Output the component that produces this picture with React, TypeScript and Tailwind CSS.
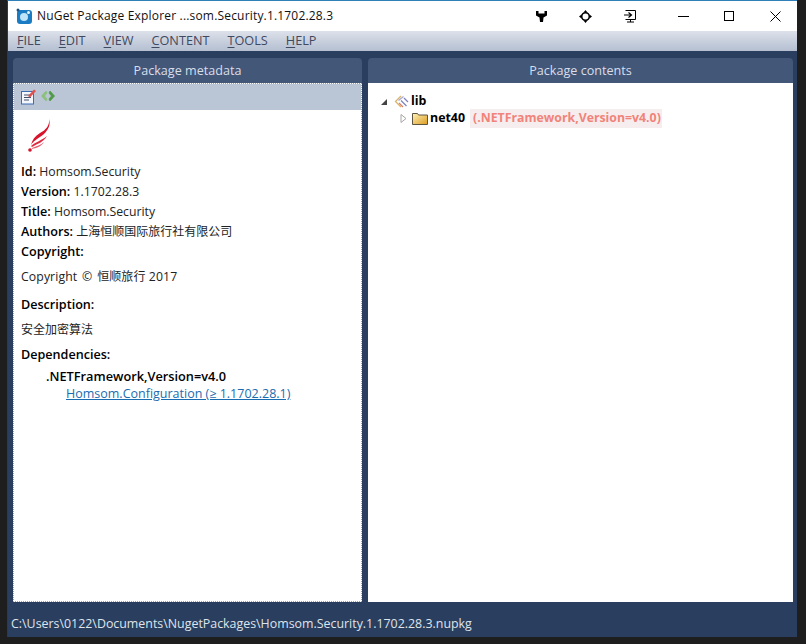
import React from "react";

const sans = "font-['Open_Sans','Noto_Sans_CJK_SC',sans-serif]";

function AppLogo() {
  return (
    <svg width="17" height="17" viewBox="0 0 17 17" className="shrink-0">
      <rect x="1" y="2" width="15" height="14" rx="3" fill="#1b7cc4" />
      <circle cx="8" cy="9" r="4" fill="#bfe3f7" />
      <circle cx="2" cy="2" r="1.5" fill="#1a4f80" />
      <circle cx="12.5" cy="4.5" r="1.5" fill="#e8f4fb" />
    </svg>
  );
}

function Feather() {
  return (
    <svg width="26" height="34" viewBox="0 0 26 34">
      <path d="M23 1 C24 7 20 12 14 15 C9 18 6 22 5 27 C8 22 13 20 18 16 C22 12 25 7 23 1Z" fill="#d8132b" />
      <path d="M5 28 C9 24 15 23 21 18 C18 24 11 26 6 29Z" fill="#e02a40" />
      <path d="M6 30 C10 28 15 27 18 24 C15 29 10 30 6 31Z" fill="#ea5f70" />
      <circle cx="4" cy="32" r="1.8" fill="#d8132b" />
    </svg>
  );
}

function EditIcon() {
  return (
    <svg width="17" height="18" viewBox="0 0 17 18">
      <rect x="1.5" y="4.5" width="12" height="12.5" fill="#f3f6fb" stroke="#3c6cb4" />
      <path d="M4 8h7M4 10.5h7M4 13h5" stroke="#44506a" strokeWidth="1" />
      <path d="M8 9 L14 2.5 L16 4 L10 10.5Z" fill="#e2524c" />
    </svg>
  );
}

function XmlIcon() {
  return (
    <svg width="16" height="12" viewBox="0 0 16 12">
      <path d="M6 1 L1.5 6 L6 11 L7 9 L4.5 6 L7 3Z" fill="#8cc07c" stroke="#8cc07c" strokeWidth="0.8" />
      <path d="M10 1 L14.5 6 L10 11 L9 9 L11.5 6 L9 3Z" fill="#4f9a45" stroke="#4f9a45" strokeWidth="0.8" />
    </svg>
  );
}

function LibIcon() {
  return (
    <svg width="15" height="13" viewBox="0 0 15 13">
      <path d="M7 1 L1.5 6.5 L7 12" fill="none" stroke="#dcb36a" strokeWidth="1.3" />
      <path d="M4.5 5.5 L9.5 1.5" fill="none" stroke="#a5a8d4" strokeWidth="1.2" />
      <path d="M7 5.5 L12.5 11 M10 3 L14 7" fill="none" stroke="#7d82bd" strokeWidth="1.2" />
      <path d="M5 8 L9 12" fill="none" stroke="#d9806f" strokeWidth="1.2" />
    </svg>
  );
}

function FolderIcon() {
  return (
    <svg width="16" height="13" viewBox="0 0 16 13">
      <defs>
        <linearGradient id="fold" x1="0" y1="0" x2="1" y2="1">
          <stop offset="0" stopColor="#fff3b8" />
          <stop offset="1" stopColor="#dc9c22" />
        </linearGradient>
      </defs>
      <path d="M0.5 1.5 h5 l1 1.5 h9 v9.5 h-15z" fill="url(#fold)" stroke="#5d5540" />
    </svg>
  );
}

function WindowTool({ kind }: { kind: "wrench" | "target" | "enter" }) {
  if (kind === "wrench")
    return (
      <svg width="13" height="13" viewBox="0 0 13 13">
        <path d="M1 1 L3.5 1 L3.5 3.5 L9.5 3.5 L9.5 1 L12 1 L12 5.5 L8.5 7.5 L8 12 L5 12 L4.5 7.5 L1 5.5Z" fill="#000" />
      </svg>
    );
  if (kind === "target")
    return (
      <svg width="13" height="13" viewBox="0 0 13 13">
        <circle cx="6.5" cy="6.5" r="3.8" fill="none" stroke="#000" strokeWidth="1.6" />
        <path d="M6.5 0 L8.5 2.5 H4.5Z M6.5 13 L8.5 10.5 H4.5Z M0 6.5 L2.5 4.5 V8.5Z M13 6.5 L10.5 4.5 V8.5Z" fill="#000" />
      </svg>
    );
  return (
    <svg width="14" height="14" viewBox="0 0 14 14">
      <path d="M2.5 1.5 H12.5 V10.5 H2.5 M4 13 H11 M7.5 10.5 V13" fill="none" stroke="#000" />
      <path d="M1 6 H8 M5.5 3.5 L8.5 6 L5.5 8.5" fill="none" stroke="#000" strokeWidth="1.2" />
    </svg>
  );
}

function Menu({ first, rest }: { first: string; rest: string }) {
  return (
    <span>
      <span className="underline underline-offset-2">{first}</span>
      {rest}
    </span>
  );
}

function Cjk({ children }: { children: React.ReactNode }) {
  return <span className="text-[12px]">{children}</span>;
}

function Row({ label, value }: { label: string; value?: React.ReactNode }) {
  return (
    <div className="h-5 leading-5 whitespace-nowrap">
      <span className="font-semibold text-black text-[12.6px]">{label}</span>
      {value ? <span> {value}</span> : null}
    </div>
  );
}

export default function App() {
  return (
    <div className={`${sans} w-[806px] h-[644px] overflow-hidden bg-[#1e1e1e] flex flex-col pl-[7px] pr-[9px] pb-[7px] text-[12.25px] text-[#222]`}>
      <div className="flex-1 flex flex-col border-t border-[#2f7fb8] border-l border-l-[#2a3a55] min-h-0">
        <div className="h-[30px] bg-white flex items-center shrink-0 pl-[8px]">
          <AppLogo />
          <span className="ml-[4px] text-[12px] text-[#111] tracking-[0.18px] whitespace-nowrap">NuGet Package Explorer ...som.Security.1.1702.28.3</span>
          <div className="ml-auto flex items-center pl-[1px] -mr-px">
            <div className="flex items-center gap-[31px] mr-[23px]">
              <WindowTool kind="wrench" />
              <WindowTool kind="target" />
              <WindowTool kind="enter" />
            </div>
            <div className="w-[46px] flex justify-center">
              <div className="w-[11px] h-px bg-black" />
            </div>
            <div className="w-[46px] flex justify-center">
              <div className="w-[10px] h-[10px] border border-black" />
            </div>
            <div className="w-[46px] flex justify-center">
              <svg width="11" height="11" viewBox="0 0 11 11">
                <path d="M0.5 0.5 L10.5 10.5 M10.5 0.5 L0.5 10.5" stroke="#000" fill="none" />
              </svg>
            </div>
          </div>
        </div>
        <div className="h-[20px] shrink-0 bg-gradient-to-b from-[#dde1ea] to-[#b4bfd1] flex items-center pl-[9px] gap-[18px] text-[12.7px] text-[#3f4960]">
          <Menu first="F" rest="ILE" />
          <Menu first="E" rest="DIT" />
          <Menu first="V" rest="IEW" />
          <Menu first="C" rest="ONTENT" />
          <Menu first="T" rest="OOLS" />
          <Menu first="H" rest="ELP" />
        </div>
        <div className="flex-1 min-h-0 bg-[#2a3e5f] flex flex-col">
          <div className="flex-1 min-h-0 flex gap-[6px] pt-[7px] pl-[5px] pr-[4px] pb-[10px]">
            <section className="w-[349px] flex flex-col min-h-0">
              <div className="h-[25px] shrink-0 pt-[2px] bg-[#435779] text-[#d8deea] text-[12.6px] flex items-center justify-center rounded-t-sm">Package metadata</div>
              <div className="flex-1 min-h-0 bg-white border border-dotted border-[#9aa4b5] flex flex-col">
                <div className="h-[26px] shrink-0 bg-[#bac5d6] flex items-center pl-[6px] gap-[3px]">
                  <div className="-mt-[3px]">
                    <EditIcon />
                  </div>
                  <div className="-mt-[2px]">
                    <XmlIcon />
                  </div>
                </div>
                <div className="pl-[7px] pt-[8px]">
                  <div className="h-[31px] pl-[5px]">
                    <Feather />
                  </div>
                  <div className="mt-[13px]">
                    <Row label="Id:" value="Homsom.Security" />
                    <Row label="Version:" value="1.1702.28.3" />
                    <Row label="Title:" value="Homsom.Security" />
                    <Row label="Authors:" value={<Cjk>上海恒顺国际旅行社有限公司</Cjk>} />
                    <Row label="Copyright:" />
                  </div>
                  <div className="mt-[5px] h-5 leading-5 tracking-[0.1px] whitespace-nowrap">Copyright <span className="mx-[1.5px]">©</span> <Cjk>恒顺旅行</Cjk> 2017</div>
                  <div className="mt-[8px] h-5 leading-5 font-semibold text-black text-[12.6px]">Description:</div>
                  <div className="mt-[5px] h-5 leading-5 text-[12px]">安全加密算法</div>
                  <div className="mt-[5px] h-5 leading-5 font-semibold text-black text-[12.6px]">Dependencies:</div>
                  <div className="mt-[3px] ml-[25px] h-[17px] leading-[17px] font-semibold text-black text-[12.75px]">.NETFramework,Version=v4.0</div>
                  <div className="ml-[45px] h-[17px] leading-[17px] text-[#1a6cb0] underline text-[12.5px]">Homsom.Configuration (≥ 1.1702.28.1)</div>
                </div>
              </div>
            </section>
            <section className="flex-1 flex flex-col min-h-0">
              <div className="h-[25px] shrink-0 pt-[2px] bg-[#435779] text-[#d8deea] text-[12.6px] flex items-center justify-center rounded-t-sm">Package contents</div>
              <div className="flex-1 bg-white pl-[12px] pt-[10px] text-[12.4px]">
                <div className="h-[17px] flex items-center font-bold text-black">
                  <svg width="8" height="8" viewBox="0 0 8 8" className="mr-[6px]">
                    <path d="M7 1 V7 H1Z" fill="#444" />
                  </svg>
                  <LibIcon />
                  <span className="ml-[2px]">lib</span>
                </div>
                <div className="h-[17px] flex items-center pl-[20px]">
                  <svg width="7" height="9" viewBox="0 0 7 9" className="mr-[5px]">
                    <path d="M1 0.5 L6 4.5 L1 8.5Z" fill="#fff" stroke="#a6a6a6" />
                  </svg>
                  <FolderIcon />
                  <span className="ml-[2px] font-bold text-black">net40</span>
                  <span className="ml-[5px] pl-[3px] pr-px bg-[#f6eeee] font-bold text-[#f2837a] text-[12.3px] whitespace-nowrap">(.NETFramework,Version=v4.0)</span>
                </div>
              </div>
            </section>
          </div>
          <div className="h-[26px] shrink-0 flex items-center pl-[3px] text-[12.4px] text-[#dfe4ec] bg-[#2a3e5f] -mt-px whitespace-nowrap">
            C:\Users\0122\Documents\NugetPackages\Homsom.Security.1.1702.28.3.nupkg
          </div>
        </div>
      </div>
    </div>
  );
}
